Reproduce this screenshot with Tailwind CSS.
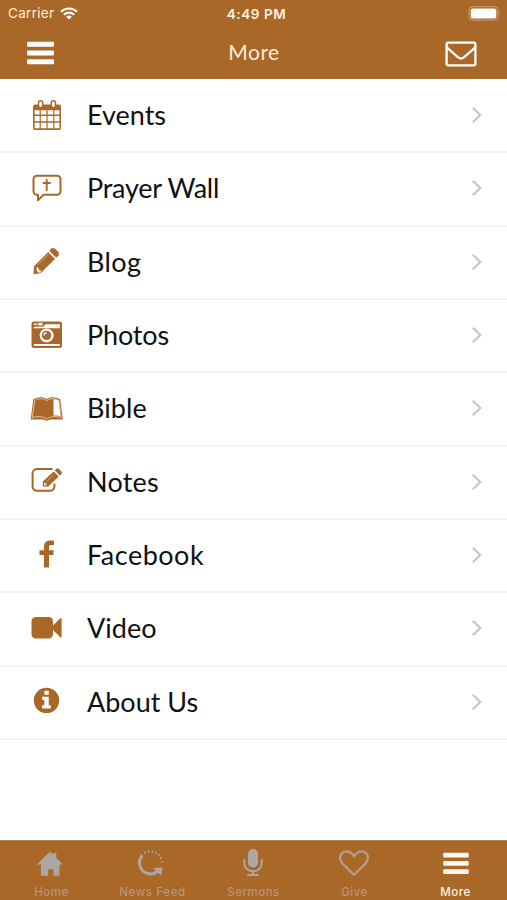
<!DOCTYPE html>
<html lang="en">
<head>
  <meta charset="UTF-8" />
  <meta name="viewport" content="width=device-width, initial-scale=1.0"/>
  <title>More</title>
  <script src="https://cdn.jsdelivr.net/npm/@tailwindcss/browser@4"></script>
</head>
<body class="bg-white">
<div class="flex flex-col h-[900px] w-[507px] overflow-hidden font-['Lato',sans-serif]">

  <!-- Header -->
  <header class="h-[79px] shrink-0 bg-[#a96828] text-white">
    <div class="grid grid-cols-3 items-center h-[27px] pl-2 pr-[6px] font-['Inter',sans-serif] text-[13px]">
      <div class="flex items-center gap-[6px] text-[#fdeedd]">
        <span class="text-[13.5px] tracking-[0.3px]">Carrier</span>
        <svg class="w-[18px] h-[13px]" viewBox="0 0 18 13" fill="none" stroke="#fff" stroke-width="2.1">
          <path d="M1 4.7a11.5 11.5 0 0 1 16 0"/>
          <path d="M3.9 7.7a7.4 7.4 0 0 1 10.2 0"/>
          <path d="M9 12.6 6.2 9.8a4 4 0 0 1 5.600 0z" fill="#fff" stroke="none"/>
        </svg>
      </div>
      <div class="text-center text-[13.5px] font-semibold tracking-[0.6px] text-[#fff3e4] -mr-1 pt-px">4:49 PM</div>
      <svg class="w-[33px] h-[15px] justify-self-end" viewBox="0 0 33 15">
        <rect x="1" y="0.7" width="29" height="13.4" rx="3.8" fill="none" stroke="#cfa278" stroke-width="1"/>
        <rect x="2.7" y="2.4" width="25.6" height="10" rx="2.2" fill="#fff"/>
        <path d="M31.2 5.2q1.6 2.2 0 4.4z" fill="#cfa278"/>
      </svg>
    </div>
    <div class="grid grid-cols-3 items-center h-[52px] pl-[27px] pr-[30px]">
      <svg class="w-[27px] h-[24px]" viewBox="0 0 27 24" fill="#fff">
        <rect y="0.8" width="27" height="5" rx="1"/>
        <rect y="9.5" width="27" height="5" rx="1"/>
        <rect y="18.2" width="27" height="5" rx="1"/>
      </svg>
      <div class="text-center text-[21px] leading-6 tracking-[0.5px] text-[#fdebd6] pl-[4px] -mt-[2px]">More</div>
      <svg class="w-[32px] h-[26px] justify-self-end mt-[2px]" viewBox="0 0 32 26" fill="none" stroke="#fff" stroke-width="2.3" stroke-linejoin="round">
        <rect x="1.600" y="1.600" width="28.800" height="22.800" rx="1.600"/>
        <path d="M1.800 5.500c.5 1.500 1.500 2.500 3 3.700l8.400 7.200q2.800 2.200 5.600 0l8.400-7.200c1.500-1.200 2.500-2.200 3-3.700"/>
      </svg>
    </div>
  </header>

  <!-- Menu list, rows are filled in by the script below -->
  <main id="menu" class="grow pt-px text-[27px] text-[#111]"></main>

  <!-- Tab bar -->
  <nav class="grid grid-cols-5 h-[60px] shrink-0 bg-[#a96828] border-t border-[#b98452] px-px text-center font-['Inter',sans-serif] font-medium text-[11.5px] leading-[14px] tracking-[0.5px] text-[#b3967b]">
    <div class="flex flex-col items-center">
      <svg class="w-[32px] h-[32px] mt-[6px] mb-[6px] -ml-[3px]" viewBox="0 0 32 32" fill="#aaa7a4">
        <path d="M16 4.500 19.300 7.800V6h3v4.800L29 17.400h-3.500V28.700h-6.300v-6.500h-5v6.500H7V17.400H3z"/>
      </svg>
      <span>Home</span>
    </div>
    <div class="flex flex-col items-center">
      <svg class="w-[32px] h-[32px] mt-[6px] mb-[6px] -ml-[3px]" viewBox="0 0 32 32" fill="none" stroke="#aaa7a4">
        <path d="M7.400 8.200C4.400 11.500 3.800 16 5.400 20c2.900 7 11.300 9 17.200 4.500" stroke-width="3"/>
        <path d="M18.200 21.300 27.600 20.400 26 28.800z" fill="#aaa7a4" stroke="none"/>
        <path d="M9.500 6.300A11.300 11.300 0 0 1 27 15.500" stroke-width="2.500" stroke-dasharray="1.400 2.300"/>
      </svg>
      <span class="tracking-[0.6px]">News Feed</span>
    </div>
    <div class="flex flex-col items-center">
      <svg class="w-[32px] h-[32px] mt-[6px] mb-[6px] -ml-px" viewBox="0 0 32 32" fill="none" stroke="#aaa7a4" stroke-width="2">
        <rect x="11" y="2" width="10" height="18.500" rx="5" fill="#aaa7a4" stroke="none"/>
        <path d="M7.300 13v3.500a8.700 7.800 0 0 0 17.400 0V13M16 24v4M11 28h10" stroke-linecap="round"/>
      </svg>
      <span>Sermons</span>
    </div>
    <div class="flex flex-col items-center">
      <svg class="w-[32px] h-[32px] mt-[6px] mb-[6px] -ml-px" viewBox="0 0 32 32" fill="none" stroke="#b39e8b" stroke-width="2.300" stroke-linejoin="round">
        <path d="M16 27.800 4.600 16.600C2.500 14.500 2.100 12.500 2.100 10.800 2.100 7 5 4.400 8.600 4.400c3.400 0 5.400 2 7.400 4.800 2-2.800 4-4.800 7.400-4.800 3.600 0 6.500 2.600 6.500 6.400 0 1.700-.4 3.700-2.500 5.800z"/>
      </svg>
      <span>Give</span>
    </div>
    <div class="flex flex-col items-center">
      <svg class="w-[32px] h-[32px] mt-[6px] mb-[6px]" viewBox="0 0 32 32" fill="#fff7ee">
        <rect x="3.200" y="5.800" width="25.500" height="4.800" rx="1"/>
        <rect x="3.200" y="14" width="25.500" height="4.800" rx="1"/>
        <rect x="3.200" y="22.300" width="25.500" height="4.800" rx="1"/>
      </svg>
      <span class="text-[#fff3e4]">More</span>
    </div>
  </nav>
</div>

<script>
  // Icons are drawn on a 36x36 box, currentColor is the brand brown
  const items = [
    { label: "Events", spacing: "0px", icon: `
      <path d="M6 6.500h24a2 2 0 0 1 2 2V30a2 2 0 0 1-2 2H6a2 2 0 0 1-2-2V8.500a2 2 0 0 1 2-2z" fill="currentColor"/>
      <g fill="#fff">
        <path d="M5.600 12.300h5v4.300h-5zM11.800 12.300h5.600v4.300h-5.600zM18.600 12.300h5.600v4.300h-5.600zM25.400 12.300h5v4.300h-5z"/>
        <path d="M5.600 18h5v5.300h-5zM11.800 18h5.600v5.300h-5.600zM18.600 18h5.600v5.300h-5.600zM25.400 18h5v5.300h-5z"/>
        <path d="M5.600 24.700h5v5.500h-5zM11.800 24.700h5.600v5.500h-5.600zM18.600 24.700h5.600v5.500h-5.600zM25.400 24.700h5v5.500h-5z"/>
      </g>
      <rect x="9.500" y="2.700" width="4.200" height="7" rx="2.100" fill="#fff" stroke="currentColor" stroke-width="1.500"/>
      <rect x="22.300" y="2.700" width="4.200" height="7" rx="2.100" fill="#fff" stroke="currentColor" stroke-width="1.500"/>` },
    { label: "Prayer Wall", spacing: "-0.25px", icon: `
      <path d="M8 4.700h20a3.500 3.500 0 0 1 3.500 3.500v12a3.500 3.500 0 0 1-3.500 3.500H14.500L9 29.200V23.700H8a3.500 3.500 0 0 1-3.500-3.500v-12A3.500 3.500 0 0 1 8 4.700z" fill="none" stroke="currentColor" stroke-width="2" stroke-linejoin="round"/>
      <path d="M17.700 8v12M13.700 12h8" fill="none" stroke="currentColor" stroke-width="1.900"/>` },
    { label: "Blog", spacing: "0.4px", icon: `
      <path d="M22.700 3.900 26 4.600 29.800 8.500 29.600 11.500 27.200 13.700 20.400 7z" fill="currentColor"/>
      <path d="M19.200 8.100 26 14.900 11.500 29.200 4.500 30.200 5 22.300z" fill="currentColor"/>
      <path d="M8 22.800l1.600 1.400.2 1.800 1.800.4.4 1.800-2.200.5L7.400 26.200z" fill="#fff"/>
      <path d="M9.600 20 19.500 10.200" stroke="#fff" stroke-width="1" stroke-opacity=".5"/>` },
    { label: "Photos", spacing: "-0.15px", icon: `
      <rect x="2.500" y="3.500" width="30.500" height="26.500" rx="2.500" fill="currentColor"/>
      <path d="M4.800 5.600h3.500v1.500H4.800zM9.200 4.800h4.400v2.600H9.200z" fill="#fff" fill-opacity=".85"/>
      <path d="M4.800 8.800h9.500l2.200-2.600h14.300v4H4.800z" fill="#fff"/>
      <path d="M4.800 26h26v1.900h-26z" fill="#fff"/>
      <circle cx="17.600" cy="17.400" r="7" fill="#fff"/>
      <circle cx="17.600" cy="17.400" r="4.700" fill="currentColor"/>
      <path d="M15 17.500a2.700 2.700 0 0 1 2.700-2.700" fill="none" stroke="#fff" stroke-width="1.200"/>` },
    { label: "Bible", spacing: "0.1px", icon: `
      <path d="M4.300 8.300C8.500 5.700 14 5.400 17.800 8 21.500 5.400 27 5.700 31.200 8.300L33.900 28.600H22c-2 0-2.500 1.200-4.200 1.200s-2.200-1.200-4.200-1.200H1.700z" fill="currentColor"/>
      <path d="M5.700 9.200C9.500 7.200 14.500 7 17.800 9.600 21 7 26 7.200 29.900 9.200L32.300 26.600C27 24.900 21.500 25.200 17.800 28 14 25.200 8.500 24.900 3.300 26.600z" fill="none" stroke="#fff" stroke-width=".8" stroke-opacity=".7"/>
      <path d="M24.500 8.200q2.800.2 5 1.300L31.500 25.200q-3-.8-7-.5z" fill="#fff"/>` },
    { label: "Notes", spacing: "0.2px", icon: `
      <path d="M23.500 5H7.500A4.200 4.200 0 0 0 3.600 9.200v13.400a4.200 4.200 0 0 0 4.200 4.200h13.400a4.200 4.200 0 0 0 4.200-4.200V19.500" fill="none" stroke="currentColor" stroke-width="2"/>
      <path d="M27.700 4.500 29.500 4.500 32.800 7.900 32.600 10 30.800 11.500 25.800 6.400zM24.700 7.500 29.700 12.500 19.200 22.400H13.800V17.600z" fill="currentColor"/>
      <path d="M17.300 18 24.200 11.300" stroke="#fff" stroke-width=".8" stroke-opacity=".5"/>
      <path d="M15.200 18.200 18.200 21 15.200 21.200z" fill="#fff"/>` },
    { label: "Facebook", spacing: "0.5px", icon: `
      <path d="M25 2.700V7h-2.700c-1.900 0-2.300.9-2.300 2.300v3h4.900l-.7 4.800H20v12.300h-5.100V17.100h-4.400v-4.800h4.400V8.600c0-4.100 2.600-6.200 6.300-6.200 1.800 0 3.300.1 3.800.3z" fill="currentColor"/>` },
    { label: "Video", spacing: "0px", icon: `
      <rect x="2.500" y="6" width="21.500" height="21.500" rx="4.500" fill="currentColor"/>
      <path d="M23.500 15 31.300 7.200Q32.600 6.500 32.600 7.800V25.700Q32.600 27 31.300 26.300L23.500 18.500z" fill="currentColor"/>` },
    { label: "About Us", spacing: "0px", icon: `
      <circle cx="17.500" cy="16.400" r="12.700" fill="currentColor"/>
      <path d="M15.400 6.800h4.300v4h-4.300zM13.200 12.700h6.500v8.500h2.100v3.300h-8.700v-3.300h2.200v-5.300h-2.100z" fill="#fff"/>` }
  ];

  document.getElementById("menu").innerHTML = items.map((item) => `
    <div class="flex items-center h-[73.33px] border-b-2 border-[#f3f3f3] pl-[29px] pr-[24px]">
      <svg class="w-9 h-9 shrink-0 text-[#a96828]" viewBox="0 0 36 36">${item.icon}</svg>
      <span class="grow ml-[22px] -mt-[1.5px] leading-8" style="letter-spacing:${item.spacing}">${item.label}</span>
      <svg class="w-[12px] h-[18px] -mt-[1.5px]" viewBox="0 0 12 18" fill="none" stroke="#c6c6c6" stroke-width="2.200"><path d="M1.800 1.700 9.300 9 1.800 16.300"/></svg>
    </div>`).join("");
</script>
</body>
</html>
